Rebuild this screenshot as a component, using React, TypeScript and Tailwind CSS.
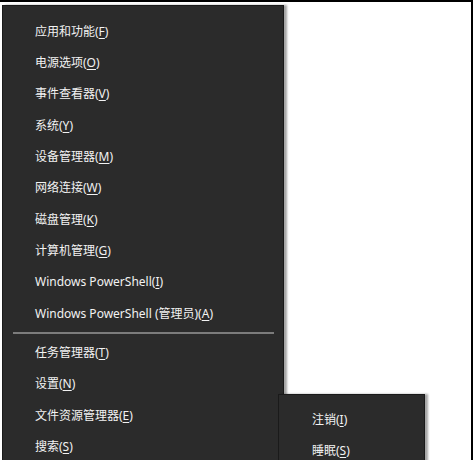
const mainItems: [string, string, string][] = [
  ["应用和功能(", "F", ")"],
  ["电源选项(", "O", ")"],
  ["事件查看器(", "V", ")"],
  ["系统(", "Y", ")"],
  ["设备管理器(", "M", ")"],
  ["网络连接(", "W", ")"],
  ["磁盘管理(", "K", ")"],
  ["计算机管理(", "G", ")"],
  ["Windows PowerShell(", "I", ")"],
  ["Windows PowerShell (管理员)(", "A", ")"],
];

const lowerItems: [string, string, string][] = [
  ["任务管理器(", "T", ")"],
  ["设置(", "N", ")"],
  ["文件资源管理器(", "E", ")"],
  ["搜索(", "S", ")"],
];

const subItems: [string, string, string][] = [
  ["注销(", "I", ")"],
  ["睡眠(", "S", ")"],
];

function Item({ label }: { label: [string, string, string] }) {
  return (
    <div className="flex h-[31.33px] items-center whitespace-nowrap">
      <span>
        {label[0]}
        <span className="underline underline-offset-2">{label[1]}</span>
        {label[2]}
      </span>
    </div>
  );
}

export default function App() {
  return (
    <div
      className="relative h-[460px] w-[473px] overflow-hidden border-t-2 border-r-2 border-black bg-white text-[12px] text-[#f2f2f2]"
      style={{ fontFamily: '"Noto Sans", "Noto Sans CJK SC", sans-serif' }}
    >
      <div className="ml-[2px] mt-[3px] h-[480px] w-[282px] border border-[#1a1a1a] bg-[#2b2b2b] pl-[32px] pt-[10px] shadow-[3px_0_2px_rgba(0,0,0,0.35)]">
        {mainItems.map((it) => (
          <Item key={it[0]} label={it} />
        ))}
        <div className="-ml-[22px] flex h-[8px] w-[261px] items-center">
          <div className="h-[2px] w-full bg-[#7c7c7c]" />
        </div>
        {lowerItems.map((it) => (
          <Item key={it[0]} label={it} />
        ))}
      </div>
      <div className="absolute left-[278px] top-[392px] h-[80px] w-[147px] border border-[#1a1a1a] bg-[#2b2b2b] pl-[33px] pt-[9px] shadow-[3px_0_2px_rgba(0,0,0,0.35)]">
        {subItems.map((it) => (
          <Item key={it[0]} label={it} />
        ))}
      </div>
    </div>
  );
}
